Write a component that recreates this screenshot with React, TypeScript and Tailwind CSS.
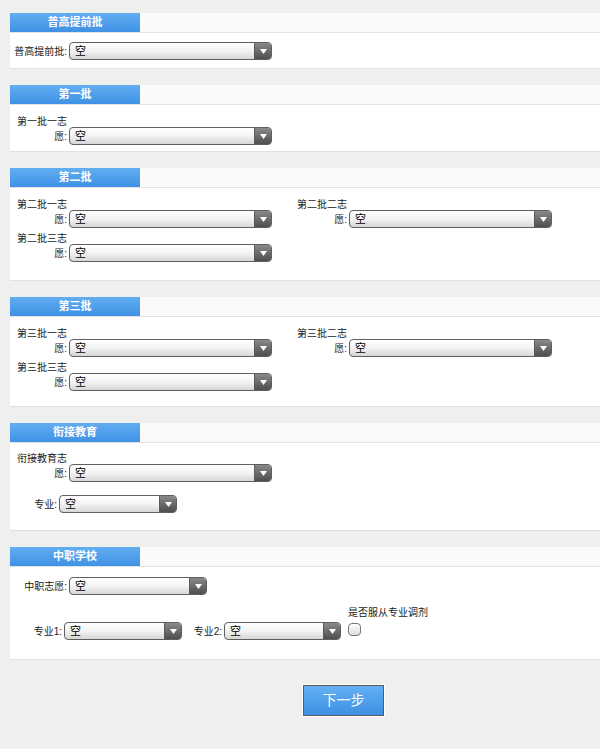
import React from 'react';

const font = "font-['Liberation_Sans','Noto_Sans_CJK_SC',sans-serif]";

function FakeSelect({ className }: { className: string }) {
  return (
    <div
      className={`flex h-[18px] shrink-0 overflow-hidden rounded-[4px] border border-[#5f5f5f] bg-linear-to-b from-white via-[#f3f3f3] to-[#d6d6d6] ${className}`}
    >
      <span className="flex-1 pl-[5px] text-[11px] leading-[16px] text-black">空</span>
      <span className="flex w-[17px] items-center justify-center border-l border-[#5a5a5a] bg-linear-to-b from-[#8a8a8a] to-[#4e4e4e]">
        <svg width="7" height="5" viewBox="0 0 7 5">
          <path d="M0 0h7L3.5 5z" fill="#fff" />
        </svg>
      </span>
    </div>
  );
}

// label split over two lines, right edge lined up with the select
function WrapRow({ first, selectClass = 'w-[203px]' }: { first: string; selectClass?: string }) {
  return (
    <div className="flex items-end">
      <div className="w-[59px] pr-[2px] pb-[1px] text-right text-[10px] leading-[15px] text-[#1a1a1a]">
        {first}
        <br />
        愿:
      </div>
      <FakeSelect className={selectClass} />
    </div>
  );
}

function Section({ title, bodyClass, children }: { title: string; bodyClass: string; children: React.ReactNode }) {
  return (
    <section>
      <div className="flex h-[20px] border-b border-[#e3e3e3] bg-[#fafafa]">
        <div className="w-[130px] bg-linear-to-b from-[#62aef1] to-[#3f91e5] text-center text-[11px] font-bold leading-[19px] text-white">
          {title}
        </div>
      </div>
      <div className={`border-b border-[#e0e0e0] bg-white ${bodyClass}`}>{children}</div>
    </section>
  );
}

const batches = [
  { title: '第二批', body: 'h-[93px] pt-[9px]', items: ['第二批一志', '第二批二志', '第二批三志'] },
  { title: '第三批', body: 'h-[90px] pt-[9px]', items: ['第三批一志', '第三批二志', '第三批三志'] },
];

export default function App() {
  return (
    <div className={`min-h-[749px] overflow-hidden bg-[#efefef] pt-[13px] pl-[10px] ${font}`}>
      <div className="flex flex-col gap-[16px]">
        <Section title="普高提前批" bodyClass="h-[36px] pt-[9px]">
          <div className="flex items-center">
            <div className="w-[59px] pr-[2px] text-right text-[10px] leading-[15px] text-[#1a1a1a]">普高提前批:</div>
            <FakeSelect className="w-[203px]" />
          </div>
        </Section>

        <Section title="第一批" bodyClass="h-[47px] pt-[9px]">
          <WrapRow first="第一批一志" />
        </Section>

        {batches.map((b) => (
          <Section key={b.title} title={b.title} bodyClass={b.body}>
            <div className="grid grid-cols-[280px_280px] gap-y-[3px]">
              {b.items.map((it) => (
                <WrapRow key={it} first={it} />
              ))}
            </div>
          </Section>
        ))}

        <Section title="衔接教育" bodyClass="h-[88px] pt-[8px]">
          <WrapRow first="衔接教育志" />
          <div className="mt-[13px] flex items-center">
            <div className="w-[49px] pr-[2px] text-right text-[10px] leading-[15px] text-[#1a1a1a]">专业:</div>
            <FakeSelect className="w-[118px]" />
          </div>
        </Section>

        <Section title="中职学校" bodyClass="h-[93px] pt-[10px]">
          <div className="flex items-center">
            <div className="w-[59px] pr-[2px] text-right text-[10px] leading-[15px] text-[#1a1a1a]">中职志愿:</div>
            <FakeSelect className="w-[138px]" />
          </div>
          <div className="mt-[11px] flex items-end">
            <div className="w-[54px] pr-[2px] pb-[1px] text-right text-[10px] leading-[15px] text-[#1a1a1a]">专业1:</div>
            <FakeSelect className="w-[118px]" />
            <div className="w-[42px] pr-[2px] pb-[1px] text-right text-[10px] leading-[15px] text-[#1a1a1a]">专业2:</div>
            <FakeSelect className="w-[117px]" />
            <div className="ml-[7px] flex flex-col">
              <span className="text-[10px] leading-[14px] text-[#1a1a1a]">是否服从专业调剂</span>
              <span className="mt-[3px] mb-[4px] h-[13px] w-[13px] rounded-[4px] border border-[#777] bg-linear-to-b from-white to-[#dedede]" />
            </div>
          </div>
        </Section>
      </div>

      <div className="pt-[25px] pl-[293px] pb-[30px]">
        <button className="h-[31px] w-[81px] border border-[#5b5b5b] bg-linear-to-b from-[#63b1f3] to-[#3d8fe2] text-[14px] text-white shadow-[0_0_0_1px_#ffffff]">
          下一步
        </button>
      </div>
    </div>
  );
}
